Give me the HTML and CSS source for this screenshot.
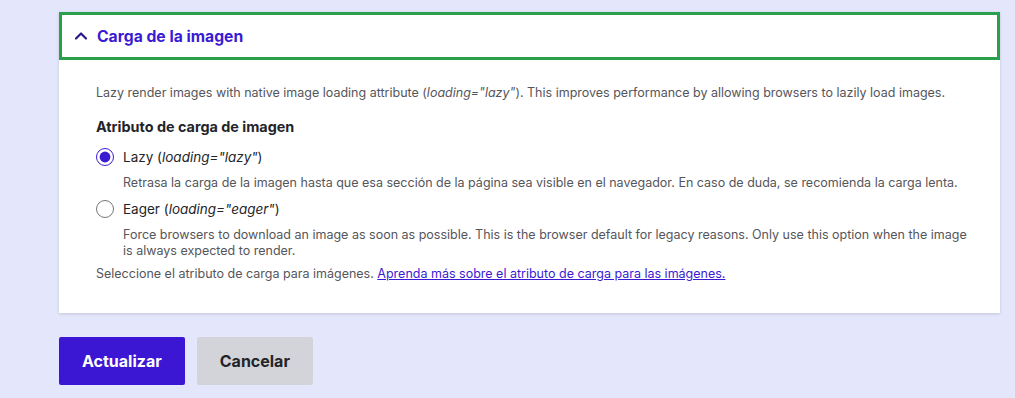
FILE: index.html
```html
<!DOCTYPE html>
<html lang="es">
<head>
    <meta charset="UTF-8">
    <title>Carga de la imagen</title>
    <link rel="stylesheet" href="styles.css">
</head>
<body>
    <div class="page">
        <details class="panel" open>
            <summary class="panel-title">
                <svg class="chevron" width="14" height="14" viewBox="0 0 14 14">
                    <path d="M2 9.5 L7 4.5 L12 9.5" fill="none" stroke="#2b1a86" stroke-width="2.2" stroke-linecap="round" stroke-linejoin="round"/>
                </svg>
                Carga de la imagen
            </summary>
            <div class="panel-body">
                <p class="intro">Lazy render images with native image loading attribute (<em>loading="lazy"</em>). This improves performance by allowing browsers to lazily load images.</p>
                <div class="field-label">Atributo de carga de imagen</div>
                <div class="option">
                    <label class="radio-row">
                        <input type="radio" name="loading" value="lazy" checked>
                        <span>Lazy (<em>loading="lazy"</em>)</span>
                    </label>
                    <div class="option-desc">Retrasa la carga de la imagen hasta que esa sección de la página sea visible en el navegador. En caso de duda, se recomienda la carga lenta.</div>
                </div>
                <div class="option">
                    <label class="radio-row">
                        <input type="radio" name="loading" value="eager">
                        <span>Eager (<em>loading="eager"</em>)</span>
                    </label>
                    <div class="option-desc">Force browsers to download an image as soon as possible. This is the browser default for legacy reasons. Only use this option when the image is always expected to render.</div>
                </div>
                <div class="help">Seleccione el atributo de carga para imágenes. <a href="#">Aprenda más sobre el atributo de carga para las imágenes.</a></div>
            </div>
        </details>
        <div class="actions">
            <button class="btn btn-primary">Actualizar</button>
            <button class="btn">Cancelar</button>
        </div>
    </div>
</body>
</html>
```

FILE: styles.css
```css
body {
    margin: 0;
    background-color: #e4e6fb;
    font-family: Inter, "Noto Sans", sans-serif;
    color: #55565b;
}
.page {
    padding: 12px 15px 0 59px;
}
.panel {
    background-color: #fff;
    box-shadow: 0 1px 3px rgba(0, 0, 0, 0.15);
}
.panel-title {
    list-style: none;
    display: flex;
    align-items: center;
    gap: 9px;
    height: 42px;
    padding: 0 12px;
    border: 3px solid #2aa04e;
    color: #3a1bd3;
    font-size: 15.7px;
    font-weight: 700;
    cursor: pointer;
}
.panel-title::-webkit-details-marker {
    display: none;
}
.panel-body {
    padding: 24px 30px 30px 37px;
    font-size: 12.5px;
}
.intro {
    margin: 0 0 16px;
    line-height: 18px;
}
.field-label {
    color: #232429;
    font-size: 14.4px;
    font-weight: 700;
    margin-bottom: 10px;
}
.radio-row {
    display: flex;
    align-items: center;
    gap: 9px;
    color: #232429;
    font-size: 13.5px;
    height: 24px;
}
.radio-row input {
    margin: 0;
    width: 18px;
    height: 18px;
    accent-color: #3a1bd3;
}
.option {
    margin-bottom: 6px;
}
.option-desc {
    padding-left: 27px;
    line-height: 16px;
    margin-top: 6px;
}
.help {
    margin-top: 6px;
    line-height: 18px;
}
.help a {
    color: #3a1bd3;
}
.actions {
    display: flex;
    gap: 12px;
    margin-top: 24px;
}
.btn {
    height: 48px;
    padding: 0 23px;
    border: none;
    border-radius: 2px;
    background-color: #d3d4d9;
    color: #232429;
    font-family: Inter, "Noto Sans", sans-serif;
    font-size: 16px;
    font-weight: 700;
}
.btn-primary {
    background-color: #3b17d4;
    color: #fff;
}
```
